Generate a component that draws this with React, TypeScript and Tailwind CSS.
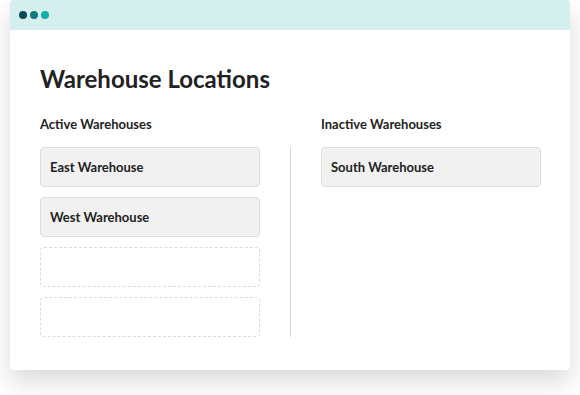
const active = ['East Warehouse', 'West Warehouse'];
const inactive = ['South Warehouse'];

const Card = ({ name }: { name: string }) => (
  <div className="h-10 flex items-center pl-[9px] pt-px rounded-[4px] bg-[#f1f1f1] border border-[#dddddd] text-[13px] font-bold text-[#222222]">
    {name}
  </div>
);

const Empty = () => <div className="h-10 rounded-[4px] border border-dashed border-[#dcdcdc]" />;

export default function App() {
  return (
    <div className="min-h-[395px] bg-white px-[10px]" style={{ fontFamily: 'Lato, "Open Sans", sans-serif' }}>
      <div className="w-[560px] bg-white rounded-[4px] shadow-[0_12px_26px_rgba(0,0,0,0.15)]">
        {/* window bar */}
        <div className="h-[30px] bg-[#d5eeee] rounded-t-[4px] flex items-center gap-[3px] pl-[9px]">
          <span className="w-2 h-2 rounded-full bg-[#0a4a55]" />
          <span className="w-2 h-2 rounded-full bg-[#0d7a80]" />
          <span className="w-2 h-2 rounded-full bg-[#12aeae]" />
        </div>

        <div className="pt-[34px] pb-[33px] pl-[30px] pr-[29px]">
          <h1 className="text-[24px] leading-[29px] font-bold text-[#222222]">Warehouse Locations</h1>

          <div className="mt-[23px] flex">
            <div className="w-[220px]">
              <h2 className="text-[13px] leading-4 font-bold text-[#222222]">Active Warehouses</h2>
              <div className="mt-[15px] flex flex-col gap-[10px]">
                {active.map((w) => (
                  <Card key={w} name={w} />
                ))}
                <Empty />
                <Empty />
              </div>
            </div>

            <div className="mx-[30px] mt-[31px] w-px bg-[#d8d8d8]" />

            <div className="w-[220px]">
              <h2 className="text-[13px] leading-4 font-bold text-[#222222]">Inactive Warehouses</h2>
              <div className="mt-[15px] flex flex-col gap-[10px]">
                {inactive.map((w) => (
                  <Card key={w} name={w} />
                ))}
              </div>
            </div>
          </div>
        </div>
      </div>
    </div>
  );
}
